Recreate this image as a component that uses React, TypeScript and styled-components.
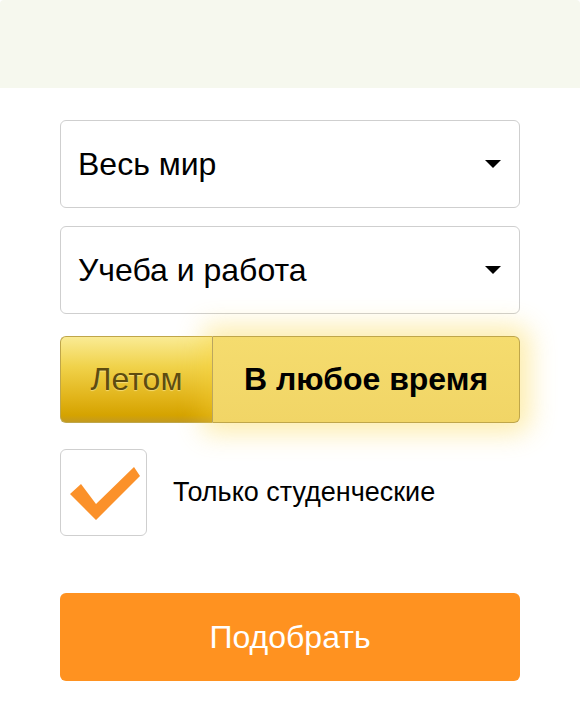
import React, { useState } from "react";
import styled, { createGlobalStyle } from "styled-components";

const GlobalStyle = createGlobalStyle`
  html, body {
    margin: 0;
    padding: 0;
    background: #ffffff;
  }
  body {
    font-family: "Liberation Sans", Arial, sans-serif;
    color: #000;
  }
`;

const Page = styled.div`
  width: 580px;
  height: 726px;
  background: #ffffff;
  overflow: hidden;
`;

const TopBand = styled.div`
  height: 88px;
  background: #f6f8ee;
  border-radius: 4px 4px 0 0;
`;

const Form = styled.form`
  display: flex;
  flex-direction: column;
  padding: 32px 60px 0;
`;

const Select = styled.div<{ $gap?: number }>`
  display: flex;
  align-items: center;
  justify-content: space-between;
  height: 86px;
  margin-top: ${(p) => p.$gap ?? 0}px;
  padding: 0 18px 0 17px;
  border: 1px solid #cfcfcf;
  border-radius: 6px;
  font-size: 32px;
  cursor: pointer;
`;

const Caret = styled.span`
  width: 0;
  height: 0;
  border-left: 8px solid transparent;
  border-right: 8px solid transparent;
  border-top: 8px solid #000;
`;

const Toggle = styled.div`
  display: flex;
  height: 87px;
  margin-top: 22px;
`;

const Segment = styled.button<{ $active: boolean }>`
  display: flex;
  align-items: center;
  justify-content: center;
  border: 1px solid #bfa64a;
  font-family: "Liberation Sans", Arial, sans-serif;
  cursor: pointer;
  padding: 0;

  &:first-child {
    width: 153px;
    border-radius: 6px 0 0 6px;
    border-right: 1px solid #9e9170;
  }
  &:last-child {
    flex: 1;
    border-left: none;
    border-radius: 0 6px 6px 0;
  }

  ${(p) =>
    p.$active
      ? `
    background: linear-gradient(#f5dc6e, #f1d566);
    color: #000;
    font-weight: bold;
    font-size: 32px;
    box-shadow: 0 0 26px 10px rgba(250, 212, 60, 0.42);
    position: relative;
    z-index: 1;
  `
      : `
    background: linear-gradient(#faeb94 0%, #f0d24a 35%, #e2b51b 70%, #d5a300 92%, #c39a20 100%);
    color: #5e4c0f;
    font-size: 32px;
    text-shadow: 0 1px 1px rgba(255, 240, 170, 0.6);
  `}
`;

const CheckRow = styled.label`
  display: flex;
  align-items: center;
  gap: 26px;
  margin-top: 26px;
  font-size: 27px;
  cursor: pointer;
`;

const CheckBox = styled.span`
  display: block;
  width: 85px;
  height: 85px;
  border: 1px solid #cfcfcf;
  border-radius: 6px;
  flex: none;
`;

const SubmitButton = styled.button`
  height: 88px;
  margin-top: 57px;
  border: none;
  border-radius: 6px;
  background: #ff9220;
  color: #ffffff;
  font-family: "Liberation Sans", Arial, sans-serif;
  font-size: 32px;
  cursor: pointer;
`;

function CheckMark() {
  return (
    <svg width="85" height="85" viewBox="0 0 85 85">
      <polygon points="9,44 20,34 35,54 73,17 79,26 35,70" fill="#fb912a" />
    </svg>
  );
}

export default function App() {
  const [anytime, setAnytime] = useState(true);
  const [students, setStudents] = useState(true);

  return (
    <Page>
      <GlobalStyle />
      <TopBand />
      <Form onSubmit={(e) => e.preventDefault()}>
        <Select>
          <span>Весь мир</span>
          <Caret />
        </Select>
        <Select $gap={18}>
          <span>Учеба и работа</span>
          <Caret />
        </Select>
        <Toggle>
          <Segment type="button" $active={!anytime} onClick={() => setAnytime(false)}>
            Летом
          </Segment>
          <Segment type="button" $active={anytime} onClick={() => setAnytime(true)}>
            В любое время
          </Segment>
        </Toggle>
        <CheckRow onClick={() => setStudents(!students)}>
          <CheckBox>{students && <CheckMark />}</CheckBox>
          Только студенческие
        </CheckRow>
        <SubmitButton type="submit">Подобрать</SubmitButton>
      </Form>
    </Page>
  );
}
